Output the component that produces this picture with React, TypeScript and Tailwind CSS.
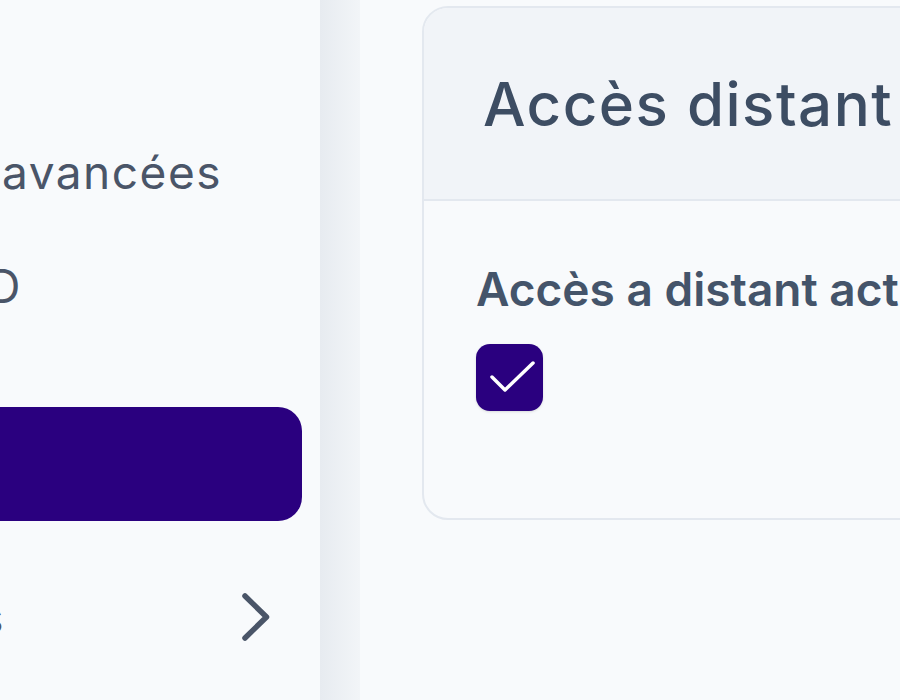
export default function App() {
  return (
    <div
      className="flex h-[700px] w-[900px] overflow-hidden bg-[#f8fafc]"
      style={{ fontFamily: "Inter, 'Noto Sans', sans-serif" }}
    >
      {/* sidebar: labels run past the left edge, only their ends show */}
      <aside className="w-[320px] shrink-0 overflow-hidden">
        <nav className="flex flex-col whitespace-nowrap pt-[115px] text-[46px] font-normal leading-none tracking-[1.5px] text-[#4a5568]">
          <div className="flex h-[114px] items-center justify-end pr-[98px]">
            <span>Paramètres avancées</span>
          </div>
          <div className="flex h-[114px] items-center justify-end pr-[298px]">
            <span>Wi-Fi SSID</span>
          </div>
          <div className="-ml-[40px] mr-[18px] mt-[64px] h-[114px] shrink-0 rounded-[24px] bg-[#2a007f]" />
          <div className="mt-[39px] flex h-[114px] items-center justify-end pr-[50px]">
            <span className="mr-[237px]">Mises à jour et sauvegardes</span>
            <svg width="28" height="48" viewBox="0 0 28 48" fill="none" className="shrink-0">
              <polyline
                points="3,3 24.5,24 3,45"
                stroke="#4a5568"
                strokeWidth="5.5"
                strokeLinecap="round"
                strokeLinejoin="round"
              />
            </svg>
          </div>
        </nav>
      </aside>

      <div className="w-[40px] shrink-0 bg-gradient-to-r from-[#e7ebf0] to-[#f2f5f8]" />

      <main className="flex-1 pl-[62px] pt-[6px]">
        <section className="w-[700px] overflow-hidden rounded-[26px] border-2 border-[#e3e8ef] bg-[#f8fafc]">
          <header className="flex h-[193px] items-center border-b-2 border-[#e3e8ef] bg-[#f1f4f8] pl-[59px]">
            <h1 className="whitespace-nowrap text-[60px] font-medium leading-none tracking-[1.5px] text-[#3d4d63]">
              Accès distant
            </h1>
          </header>
          <div className="flex h-[317px] flex-col pl-[52px] pt-[65px]">
            <label className="whitespace-nowrap text-[46px] font-semibold leading-none text-[#44546a]">
              Accès a distant activé
            </label>
            <div className="mt-[32px] flex h-[67px] w-[67px] items-center justify-center rounded-[14px] bg-[#2a007f] shadow-sm">
              <svg width="67" height="67" viewBox="0 0 67 67" fill="none">
                <polyline
                  points="16,33 29,46 57,19"
                  stroke="white"
                  strokeWidth="3.5"
                  strokeLinecap="round"
                  strokeLinejoin="round"
                />
              </svg>
            </div>
          </div>
        </section>
      </main>
    </div>
  );
}
